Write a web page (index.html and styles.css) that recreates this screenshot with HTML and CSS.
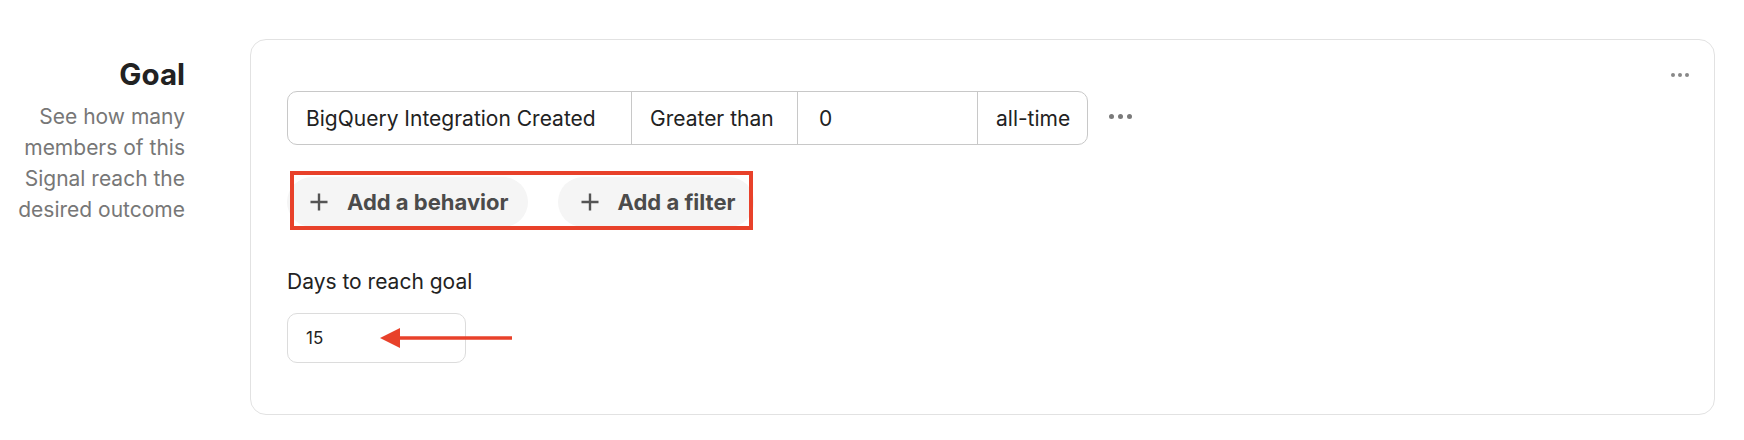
FILE: index.html
```html
<!DOCTYPE html>
<html lang="en">
<head>
<meta charset="utf-8">
<title>Goal</title>
<link rel="stylesheet" href="styles.css">
</head>
<body>
<div class="section">
  <aside class="aside">
    <h2 class="title">Goal</h2>
    <p class="desc">See how many members of this Signal reach the desired outcome</p>
  </aside>
  <div class="card">
    <button class="card-menu" aria-label="More"><span></span><span></span><span></span></button>
    <div class="cond-row">
      <div class="cond">
        <div class="seg seg-event">BigQuery Integration Created</div>
        <div class="seg seg-op">Greater than</div>
        <div class="seg seg-val">0</div>
        <div class="seg seg-time">all-time</div>
      </div>
      <button class="row-menu" aria-label="More"><span></span><span></span><span></span></button>
    </div>
    <div class="actions">
      <button class="pill">
        <svg class="plus" width="20" height="20" viewBox="0 0 20 20"><path d="M10 1.5v17M1.5 10h17" stroke="#555" stroke-width="2.4" fill="none"/></svg>
        <span>Add a behavior</span>
      </button>
      <button class="pill">
        <svg class="plus" width="20" height="20" viewBox="0 0 20 20"><path d="M10 1.5v17M1.5 10h17" stroke="#555" stroke-width="2.4" fill="none"/></svg>
        <span>Add a filter</span>
      </button>
      <div class="highlight"></div>
    </div>
    <label class="field-label">Days to reach goal</label>
    <div class="field">
      <div class="num-input">15</div>
      <svg class="arrow" width="132" height="22" viewBox="0 0 132 22"><path d="M16 11H132" stroke="#E8412A" stroke-width="3.5"/><path d="M0 11L20 1V21Z" fill="#E8412A"/></svg>
    </div>
  </div>
</div>
</body>
</html>
```

FILE: styles.css
```css
* { box-sizing: border-box; }
html, body { margin: 0; padding: 0; background: #fff; }
body {
  font-family: Inter, "Noto Sans", "Liberation Sans", sans-serif;
  color: #222;
  width: 1744px;
  height: 440px;
  overflow: hidden;
}
.section {
  display: flex;
  align-items: flex-start;
  gap: 65px;
  padding: 39px 29px 0 0;
}
.aside {
  width: 185px;
  flex: none;
  text-align: right;
  padding-top: 18px;
}
.title {
  margin: 0;
  font-size: 29.5px;
  line-height: 35px;
  font-weight: 700;
  color: #222;
}
.desc {
  margin: 9px 0 0 0;
  font-size: 21px;
  line-height: 31px;
  color: #777;
}
.card {
  position: relative;
  flex: 1;
  height: 376px;
  border: 1px solid #e2e2e2;
  border-radius: 16px;
  padding: 51px 36px 0 36px;
}
.card-menu, .row-menu {
  display: flex;
  gap: 3px;
  background: none;
  border: 0;
  padding: 0;
  cursor: pointer;
}
.card-menu span, .row-menu span {
  display: block;
  border-radius: 50%;
}
.card-menu {
  position: absolute;
  top: 33px;
  right: 25px;
}
.card-menu span { width: 4px; height: 4px; background: #888; }
.row-menu { gap: 4px; margin-left: 21px; margin-top: -4px; }
.row-menu span { width: 5px; height: 5px; background: #7a7a7a; }
.cond-row {
  display: flex;
  align-items: center;
}
.cond {
  display: flex;
  height: 54px;
  border: 1.5px solid #c8c8c8;
  border-radius: 10px;
  font-size: 21px;
  color: #222;
}
.seg {
  display: flex;
  align-items: center;
  padding: 0 0 0 18px;
  border-left: 1.5px solid #c8c8c8;
  white-space: nowrap;
}
.seg:first-child { border-left: 0; }
.seg-event { width: 343px; }
.seg-op { width: 166px; }
.seg-val { width: 180px; padding-left: 21px; }
.seg-time { width: 110px; }
.actions {
  position: relative;
  display: flex;
  gap: 30px;
  margin-top: 32px;
}
.pill {
  display: flex;
  align-items: center;
  gap: 18px;
  height: 50px;
  padding: 0 19px 0 22px;
  border: 0;
  border-radius: 25px;
  background: #f5f5f5;
  font-family: inherit;
  font-size: 22px;
  font-weight: 700;
  color: #4b4b4b;
}
.plus { flex: none; }
.highlight {
  position: absolute;
  left: 3px;
  top: -6px;
  width: 463px;
  height: 59px;
  border: 4px solid #E8412A;
  pointer-events: none;
}
.field-label {
  display: block;
  margin-top: 42px;
  font-size: 21px;
  line-height: 25px;
  color: #222;
}
.field {
  position: relative;
  margin-top: 19px;
  width: 179px;
}
.num-input {
  display: flex;
  align-items: center;
  height: 50px;
  width: 179px;
  padding-left: 18px;
  border: 1px solid #dcdcdc;
  border-radius: 10px;
  font-size: 17px;
  color: #222;
}
.arrow {
  position: absolute;
  left: 93px;
  top: 14px;
}
```
